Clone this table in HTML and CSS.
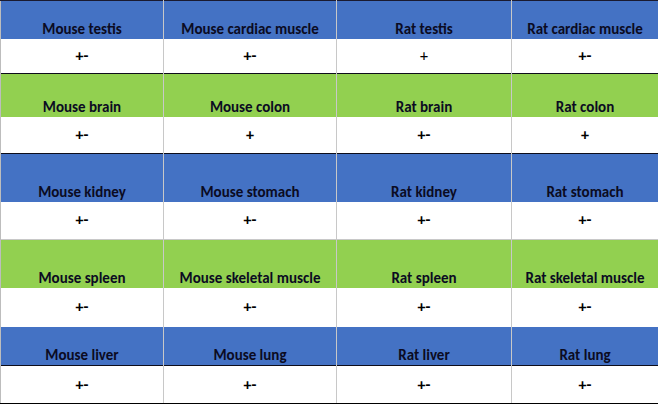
FILE: index.html
```html
<!DOCTYPE html>
<html>
<head>
<meta charset="utf-8">
<link rel="stylesheet" href="styles.css">
</head>
<body>
<table class="grid">
  <colgroup>
    <col class="c1"><col class="c2"><col class="c3"><col class="c4">
  </colgroup>
  <tr class="head blue h38 line-dark">
    <td>Mouse testis</td><td>Mouse cardiac muscle</td><td>Rat testis</td><td>Rat cardiac muscle</td>
  </tr>
  <tr class="val h35">
    <td>+-</td><td>+-</td><td class="thin">+</td><td>+-</td>
  </tr>
  <tr class="head green h43 line-dark">
    <td>Mouse brain</td><td>Mouse colon</td><td>Rat brain</td><td>Rat colon</td>
  </tr>
  <tr class="val h37">
    <td>+-</td><td>+</td><td>+-</td><td>+</td>
  </tr>
  <tr class="head blue h48 line-dark">
    <td>Mouse kidney</td><td>Mouse stomach</td><td>Rat kidney</td><td>Rat stomach</td>
  </tr>
  <tr class="val h38">
    <td>+-</td><td>+-</td><td>+-</td><td>+-</td>
  </tr>
  <tr class="head green h48 line-gray">
    <td>Mouse spleen</td><td>Mouse skeletal muscle</td><td>Rat spleen</td><td>Rat skeletal muscle</td>
  </tr>
  <tr class="val h39">
    <td>+-</td><td>+-</td><td>+-</td><td>+-</td>
  </tr>
  <tr class="head blue h39">
    <td>Mouse liver</td><td>Mouse lung</td><td>Rat liver</td><td>Rat lung</td>
  </tr>
  <tr class="val h38 line-dark last">
    <td>+-</td><td>+-</td><td>+-</td><td>+-</td>
  </tr>
</table>
</body>
</html>
```
FILE: styles.css
```css
html, body {
  margin: 0;
  padding: 0;
  background: #ffffff;
}
.grid {
  width: 658px;
  border-collapse: collapse;
  table-layout: fixed;
  font-family: Carlito, Calibri, Lato, "Open Sans", sans-serif;
  font-weight: 700;
  font-size: 15px;
  color: #0b0b22;
}
.c1 { width: 163px; }
.c2 { width: 173px; }
.c3 { width: 175px; }
.c4 { width: 147px; }
.grid td {
  padding: 0 2px;
  text-align: center;
  white-space: nowrap;
  border-left: 1px solid #c8c8c8;
  border-right: 1px solid #c8c8c8;
  line-height: 18px;
}
.grid td:first-child { border-left: 1px solid #bdbdbd; }
.grid td:nth-child(4) { border-left: 1px solid #000; border-right: 1px solid #101010; }
.grid tr:first-child td { border-top: 1px solid #1a1a30; }
.head td {
  vertical-align: bottom;
  padding-bottom: 1px;
}
.val td {
  vertical-align: middle;
  font-size: 16px;
  color: #000;
}
.val td.thin { font-weight: 400; }
.blue { background: #4472c4; }
.green { background: #92d050; }
.line-dark td { border-top: 1px solid #0d0d1a; }
.line-gray td { border-top: 1px solid #c8c8c8; }
.last td { border-bottom: 1px solid #000; }
.h35 { height: 35px; }
.h37 { height: 37px; }
.h38 { height: 38px; }
.h39 { height: 39px; }
.h43 { height: 43px; }
.h48 { height: 48px; }
```
